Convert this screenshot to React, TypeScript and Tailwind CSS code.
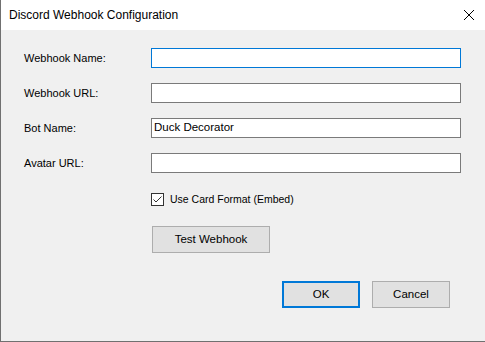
import React, { useState } from "react"

interface Field {
  label: string
  value: string
  focused?: boolean
}

const fields: Field[] = [
  { label: "Webhook Name:", value: "", focused: true },
  { label: "Webhook URL:", value: "" },
  { label: "Bot Name:", value: "Duck Decorator" },
  { label: "Avatar URL:", value: "" },
]

export default function App() {
  const [useEmbed, setUseEmbed] = useState(true)

  return (
    <div
      className="w-[485px] h-[342px] flex flex-col bg-[#f0f0f0] border-l border-b border-[#707070] text-[11px] text-black"
      style={{ fontFamily: '"Liberation Sans", Arial, sans-serif' }}
    >
      {/* Title bar */}
      <div className="h-[30px] shrink-0 bg-white flex items-center justify-between pl-2 pr-[9px]">
        <span className="text-[12px]">Discord Webhook Configuration</span>
        <svg width="12" height="12" viewBox="0 0 12 12" className="mr-[1px]">
          <path d="M1 1L11 11M11 1L1 11" stroke="#000" strokeWidth="1" />
        </svg>
      </div>

      {/* Form */}
      <div className="flex flex-col pl-[23px] pt-[18px]">
        <div className="flex flex-col gap-[15px]">
          {fields.map((f) => (
            <div key={f.label} className="flex items-center h-[20px]">
              <span className="w-[127px]">{f.label}</span>
              <div
                className={
                  "w-[310px] h-[20px] bg-white border flex items-center px-[2px] " +
                  (f.focused ? "border-[#0078d7]" : "border-[#7a7a7a]")
                }
              >
                <span className="text-[11.5px]">{f.value}</span>
              </div>
            </div>
          ))}
        </div>

        <div className="pl-[127px]">
          <label className="flex items-center gap-[6px] mt-[20px] h-[13px] cursor-default">
            <span
              onClick={() => setUseEmbed(!useEmbed)}
              className="w-[13px] h-[13px] border border-[#333] bg-white flex items-center justify-center"
            >
              {useEmbed && (
                <svg width="11" height="11" viewBox="0 0 11 11">
                  <path d="M1.5 5.5L4 8L9.5 2.5" stroke="#333" strokeWidth="1" fill="none" />
                </svg>
              )}
            </span>
            <span className="text-[10.5px]">Use Card Format (Embed)</span>
          </label>

          <button className="mt-[20px] ml-[1px] w-[118px] h-[27px] bg-[#e1e1e1] border border-[#adadad] text-[11.5px]">
            Test Webhook
          </button>
        </div>

        <div className="flex gap-[12px] mt-[28px] pl-[258px]">
          <button className="w-[78px] h-[27px] bg-[#e1e1e1] border-2 border-[#0078d7] text-[11.5px]">OK</button>
          <button className="w-[78px] h-[27px] bg-[#e1e1e1] border border-[#adadad] text-[11.5px]">Cancel</button>
        </div>
      </div>
    </div>
  )
}
